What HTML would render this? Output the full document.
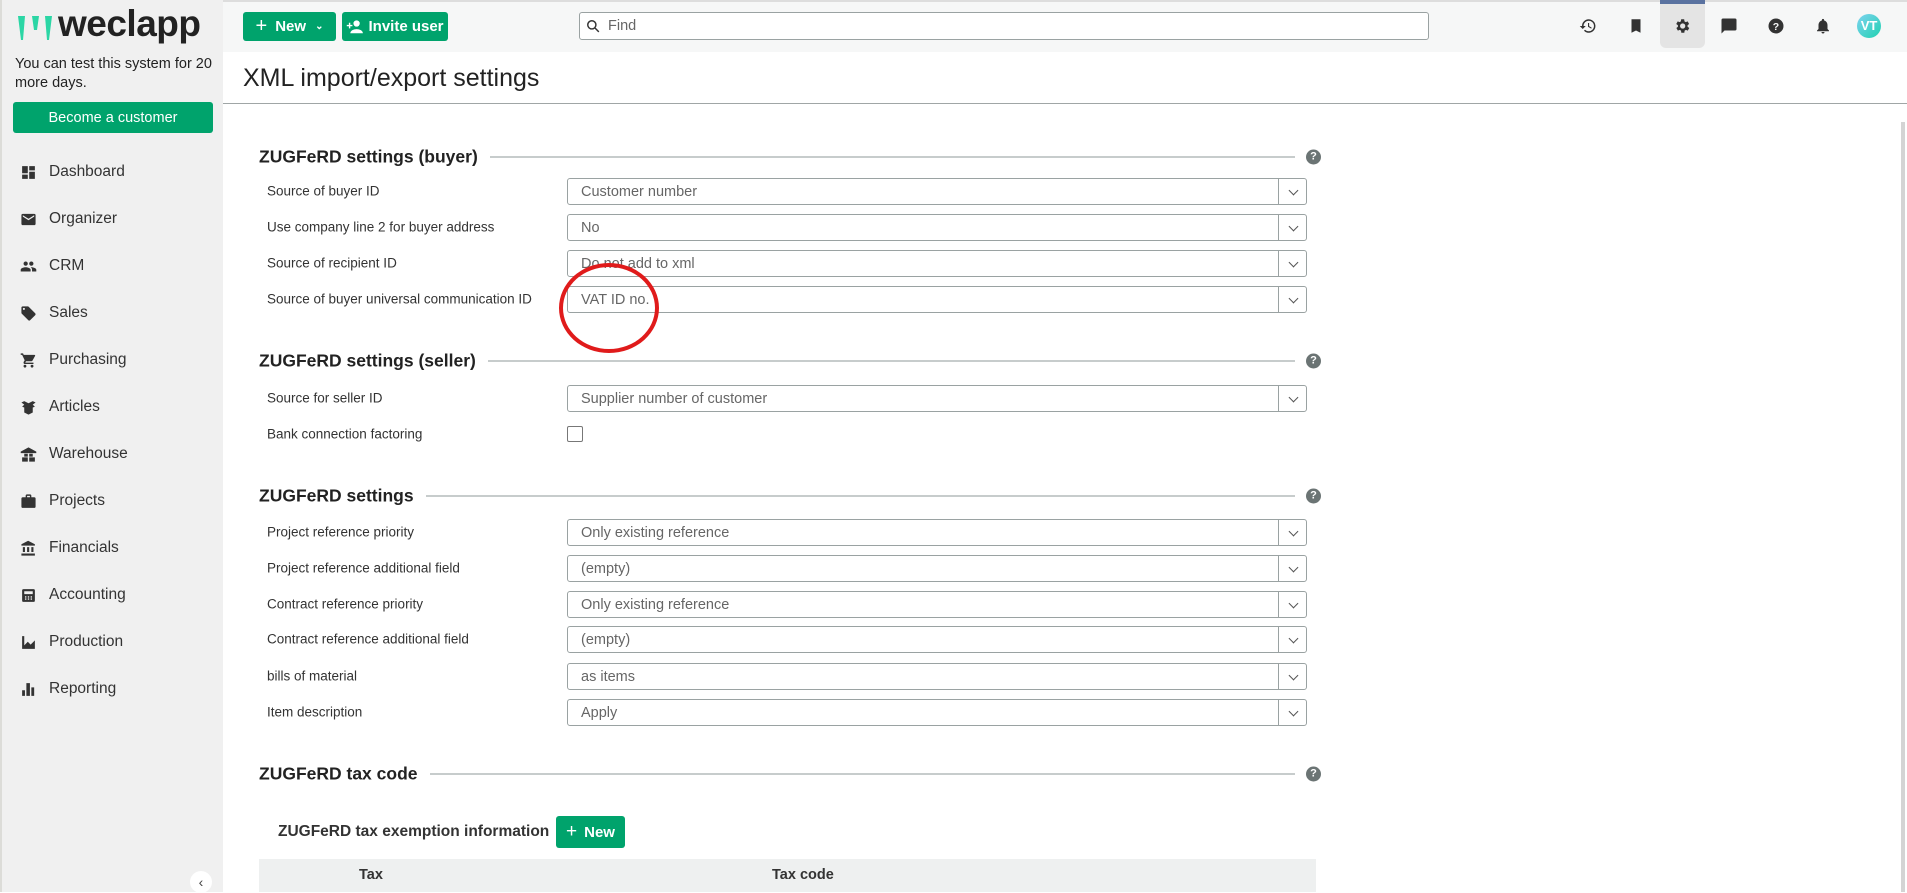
<!DOCTYPE html>
<html><head><meta charset="utf-8"><style>
*{box-sizing:border-box;margin:0;padding:0}
body{width:1907px;height:892px;overflow:hidden;font-family:"Liberation Sans",sans-serif;background:#fff;position:relative;color:#222}
.abs{position:absolute}
#side{left:0;top:0;width:223px;height:892px;background:#f0f0f0;border-left:2px solid #dcdcd8}
#hdr{left:223px;top:0;width:1684px;height:52px;background:#f6f7f7;border-top:2px solid #ddd}
.btn{background:#00a36c;color:#fff;font-weight:bold;font-size:15px;border-radius:3px;display:flex;align-items:center;justify-content:center}
.nav{left:20px;font-size:15.5px;color:#333;display:flex;align-items:center;height:24px}
.nav svg{width:17px;height:17px;margin-right:12px;fill:#333}
.lbl{left:267px;font-size:13.5px;color:#333;transform:translateY(-50%)}
.sel{left:567px;width:740px;height:27px;border:1px solid #9aa2a2;border-radius:3px;font-size:14.5px;color:#666;padding-left:13px;line-height:27px}
.sel:after{content:"";position:absolute;right:0;top:0;width:27px;height:25px;border-left:1px solid #9aa2a2}
.sel i{position:absolute;right:9px;top:8px;width:7px;height:7px;border-right:1.6px solid #555;border-bottom:1.6px solid #555;transform:rotate(45deg)}
.h2{left:259px;font-size:17.5px;font-weight:bold;color:#222;display:flex;align-items:center;transform:translateY(-50%);width:1036px}
.h2:after{content:"";flex:1;height:1px;background:#8f9898;margin-left:12px}
.q{left:1306px;width:15px;height:15px;border-radius:50%;background:#6b7474;color:#fff;font-size:11px;font-weight:bold;text-align:center;line-height:15px;transform:translateY(-50%)}
.ti{top:17px;width:18px;height:18px;fill:#333}
</style></head><body>
<div id="side" class="abs"></div>
<div id="hdr" class="abs"></div>
<svg class="abs" style="left:17px;top:14px" width="40" height="28" viewBox="0 0 40 28"><path d="M1 2h7l-2 24h-2z" fill="#2bd6a5"/><path d="M15 2h7l-2 14h-3z" fill="#2bd6a5"/><path d="M28 2h7l-3 24h-2z" fill="#2bd6a5"/></svg>
<div class="abs" style="left:58px;top:3px;font-size:37px;font-weight:bold;color:#222;letter-spacing:-0.5px">weclapp</div>
<div class="abs" style="left:15px;top:55px;font-size:14.5px;line-height:19px;color:#222">You can test this system for 20<br>more days.</div>
<div class="abs btn" style="left:13px;top:102px;width:200px;height:31px;font-weight:normal;font-size:14.5px">Become a customer</div>
<div class="abs nav" style="top:160px"><svg viewBox="0 0 24 24"><path d="M3 13h8V3H3zm0 8h8v-6H3zm10 0h8V11h-8zm0-18v6h8V3z"/></svg>Dashboard</div>
<div class="abs nav" style="top:207px"><svg viewBox="0 0 24 24"><path d="M20 4H4a2 2 0 00-2 2v12a2 2 0 002 2h16a2 2 0 002-2V6a2 2 0 00-2-2zm0 4l-8 5-8-5V6l8 5 8-5z"/></svg>Organizer</div>
<div class="abs nav" style="top:254px"><svg viewBox="0 0 24 24"><path d="M16 11a3 3 0 100-6 3 3 0 000 6zm-8 0a3 3 0 100-6 3 3 0 000 6zm0 2c-2.3 0-7 1.2-7 3.5V19h14v-2.5C15 14.2 10.3 13 8 13zm8 0c-.3 0-.6 0-1 .1 1.2.8 2 2 2 3.4V19h6v-2.5c0-2.3-4.7-3.5-7-3.5z"/></svg>CRM</div>
<div class="abs nav" style="top:301px"><svg viewBox="0 0 24 24"><path d="M21.4 11.6l-9-9C12 2.2 11.6 2 11 2H4a2 2 0 00-2 2v7c0 .6.2 1.1.6 1.4l9 9c.4.4.9.6 1.4.6s1-.2 1.4-.6l7-7c.4-.4.6-.9.6-1.4s-.2-1-.6-1.4zM5.5 7A1.5 1.5 0 115.5 4a1.5 1.5 0 010 3z"/></svg>Sales</div>
<div class="abs nav" style="top:348px"><svg viewBox="0 0 24 24"><path d="M7 18a2 2 0 100 4 2 2 0 000-4zM1 2v2h2l3.6 7.6L5.2 14c-.1.3-.2.6-.2 1a2 2 0 002 2h12v-2H7.4l1.1-2h7.5c.8 0 1.4-.4 1.7-1l3.6-6.5A1 1 0 0020.4 4H5.2l-.9-2zm16 16a2 2 0 100 4 2 2 0 000-4z"/></svg>Purchasing</div>
<div class="abs nav" style="top:395px"><svg viewBox="0 0 24 24"><path d="M2 5l4-2 6 3 6-3 4 2-4 3 3 3-3 1v7l-6 3-6-3v-7l-3-1 3-3z"/></svg>Articles</div>
<div class="abs nav" style="top:442px"><svg viewBox="0 0 24 24"><path d="M12 2L1 8v2h22V8zM6 11h5v4H6zm7 0h5v4h-5zM3 16h8v6H3zm10 0h8v6h-8z"/></svg>Warehouse</div>
<div class="abs nav" style="top:489px"><svg viewBox="0 0 24 24"><path d="M20 6h-4V4a2 2 0 00-2-2h-4a2 2 0 00-2 2v2H4a2 2 0 00-2 2v11a2 2 0 002 2h16a2 2 0 002-2V8a2 2 0 00-2-2zm-6 0h-4V4h4z"/></svg>Projects</div>
<div class="abs nav" style="top:536px"><svg viewBox="0 0 24 24"><path d="M4 10v7h3v-7zm6 0v7h3v-7zM2 22h19v-3H2zm14-12v7h3v-7zM11.5 1L2 6v2h19V6z"/></svg>Financials</div>
<div class="abs nav" style="top:583px"><svg viewBox="0 0 24 24"><path d="M19 3H5a2 2 0 00-2 2v14a2 2 0 002 2h14a2 2 0 002-2V5a2 2 0 00-2-2zM6 6h12v4H6zm1 7h2v2H7zm4 0h2v2h-2zm4 0h2v2h-2zm-8 3h2v2H7zm4 0h2v2h-2zm4 0h2v2h-2z"/></svg>Accounting</div>
<div class="abs nav" style="top:630px"><svg viewBox="0 0 24 24"><path d="M3 3h3v13l5-5 4 4 6-6v12H3z"/></svg>Production</div>
<div class="abs nav" style="top:677px"><svg viewBox="0 0 24 24"><path d="M3 13h4v8H3zm6-10h5v18H9zm7 6h4v12h-4z"/></svg>Reporting</div>
<div class="abs" style="left:190px;top:871px;width:22px;height:22px;border-radius:50%;background:#fff;font-size:14px;text-align:center;line-height:22px;color:#444">‹</div>
<div class="abs btn" style="left:243px;top:12px;width:93px;height:29px"><span style="font-size:20px;margin-right:8px;font-weight:normal">+</span>New<span style="font-size:10px;margin-left:9px">&#8964;</span></div>
<div class="abs btn" style="left:342px;top:12px;width:106px;height:29px"><svg width="17" height="14" viewBox="0 0 24 20" style="margin-right:5px"><circle cx="15" cy="5" r="4.5" fill="#fff"/><path d="M6 19c0-4 5-6 9-6s9 2 9 6z" fill="#fff"/><path d="M4 4v3H1v2h3v3h2V9h3V7H6V4z" fill="#fff"/></svg>Invite user</div>
<div class="abs" style="left:579px;top:12px;width:850px;height:28px;border:1px solid #9aa2a2;border-radius:3px;background:#fff;font-size:14.5px;color:#666;padding-left:28px;line-height:26px">Find</div>
<svg class="abs" style="left:586px;top:19px" width="14" height="14" viewBox="0 0 24 24"><circle cx="10" cy="10" r="7" fill="none" stroke="#333" stroke-width="2.5"/><path d="M15 15l7 7" stroke="#333" stroke-width="2.5"/></svg>
<svg class="abs ti" style="left:1579px" viewBox="0 0 24 24"><path d="M13 3a9 9 0 00-9 9H1l4 4 4-4H6a7 7 0 117 7 7 7 0 01-5-2l-1.4 1.4A9 9 0 1013 3zm-1 5v5l4.3 2.5.7-1.2-3.5-2.1V8z"/></svg>
<svg class="abs ti" style="left:1627px" viewBox="0 0 24 24"><path d="M6 3h12v18l-6-3-6 3z"/></svg>
<div class="abs" style="left:1660px;top:0;width:45px;height:48px;background:#e4e4e4;border-radius:0 0 6px 6px;border-top:4px solid #5a72a0"></div>
<svg class="abs ti" style="left:1673px" viewBox="0 0 24 24"><path d="M19.4 13a7.5 7.5 0 000-2l2.1-1.6-2-3.5-2.5 1a7 7 0 00-1.7-1L14.9 3h-4l-.4 2.9a7 7 0 00-1.7 1l-2.5-1-2 3.5L6.6 11a7.5 7.5 0 000 2l-2.1 1.6 2 3.5 2.5-1a7 7 0 001.7 1l.4 2.9h4l.4-2.9a7 7 0 001.7-1l2.5 1 2-3.5zM12.9 15.5a3.5 3.5 0 110-7 3.5 3.5 0 010 7z"/></svg>
<svg class="abs ti" style="left:1720px" viewBox="0 0 24 24"><path d="M20 2H4a2 2 0 00-2 2v18l4-4h14a2 2 0 002-2V4a2 2 0 00-2-2z"/></svg>
<svg class="abs ti" style="left:1767px" viewBox="0 0 24 24"><circle cx="12" cy="12" r="10"/><text x="12" y="17" font-size="14" font-weight="bold" fill="#f6f7f7" text-anchor="middle" font-family="Liberation Sans">?</text></svg>
<svg class="abs ti" style="left:1814px" viewBox="0 0 24 24"><path d="M12 22a2 2 0 002-2h-4a2 2 0 002 2zm6-6v-5c0-3-1.6-5.6-4.5-6.3V4a1.5 1.5 0 00-3 0v.7C7.6 5.4 6 8 6 11v5l-2 2v1h16v-1z"/></svg>
<div class="abs" style="left:1857px;top:14px;width:24px;height:24px;border-radius:50%;background:linear-gradient(135deg,#7fd3f0,#1fd1b0);color:#fff;font-weight:bold;font-size:13px;text-align:center;line-height:24px">VT</div>
<div class="abs" style="left:243px;top:64px;font-size:25px;color:#222">XML import/export settings</div>
<div class="abs" style="left:223px;top:103px;width:1684px;height:1px;background:#a0a6a6"></div>
<div class="abs" style="left:1901px;top:122px;width:4px;height:770px;background:#d4d4d4"></div>
<div class="abs h2" style="top:157px">ZUGFeRD settings (buyer)</div><div class="abs q" style="top:157px">?</div>
<div class="abs lbl" style="top:191px">Source of buyer ID</div><div class="abs sel" style="top:178px">Customer number<i></i></div>
<div class="abs lbl" style="top:227px">Use company line 2 for buyer address</div><div class="abs sel" style="top:214px">No<i></i></div>
<div class="abs lbl" style="top:263px">Source of recipient ID</div><div class="abs sel" style="top:250px">Do not add to xml<i></i></div>
<div class="abs lbl" style="top:299px">Source of buyer universal communication ID</div><div class="abs sel" style="top:286px">VAT ID no.<i></i></div>
<div class="abs h2" style="top:361px">ZUGFeRD settings (seller)</div><div class="abs q" style="top:361px">?</div>
<div class="abs lbl" style="top:398px">Source for seller ID</div><div class="abs sel" style="top:385px">Supplier number of customer<i></i></div>
<div class="abs lbl" style="top:434px">Bank connection factoring</div><div class="abs" style="left:567px;top:426px;width:16px;height:16px;border:1px solid #777;border-radius:2px"></div>
<div class="abs h2" style="top:496px">ZUGFeRD settings</div><div class="abs q" style="top:496px">?</div>
<div class="abs lbl" style="top:532px">Project reference priority</div><div class="abs sel" style="top:519px">Only existing reference<i></i></div>
<div class="abs lbl" style="top:568px">Project reference additional field</div><div class="abs sel" style="top:555px">(empty)<i></i></div>
<div class="abs lbl" style="top:604px">Contract reference priority</div><div class="abs sel" style="top:591px">Only existing reference<i></i></div>
<div class="abs lbl" style="top:639px">Contract reference additional field</div><div class="abs sel" style="top:626px">(empty)<i></i></div>
<div class="abs lbl" style="top:676px">bills of material</div><div class="abs sel" style="top:663px">as items<i></i></div>
<div class="abs lbl" style="top:712px">Item description</div><div class="abs sel" style="top:699px">Apply<i></i></div>
<div class="abs h2" style="top:774px">ZUGFeRD tax code</div><div class="abs q" style="top:774px">?</div>
<div class="abs" style="left:278px;top:823px;font-size:15.5px;font-weight:bold;color:#333">ZUGFeRD tax exemption information</div>
<div class="abs btn" style="left:556px;top:816px;width:69px;height:32px"><span style="font-size:19px;margin-right:7px;font-weight:normal">+</span>New</div>
<div class="abs" style="left:259px;top:859px;width:1057px;height:33px;background:#eef0f0;font-size:14.5px;font-weight:bold;color:#333;line-height:33px"><span style="position:absolute;left:100px">Tax</span><span style="position:absolute;left:513px">Tax code</span></div>
<div class="abs" style="left:559px;top:263px;width:100px;height:90px;border:4px solid #e01b1b;border-radius:50%"></div>
</body></html>
